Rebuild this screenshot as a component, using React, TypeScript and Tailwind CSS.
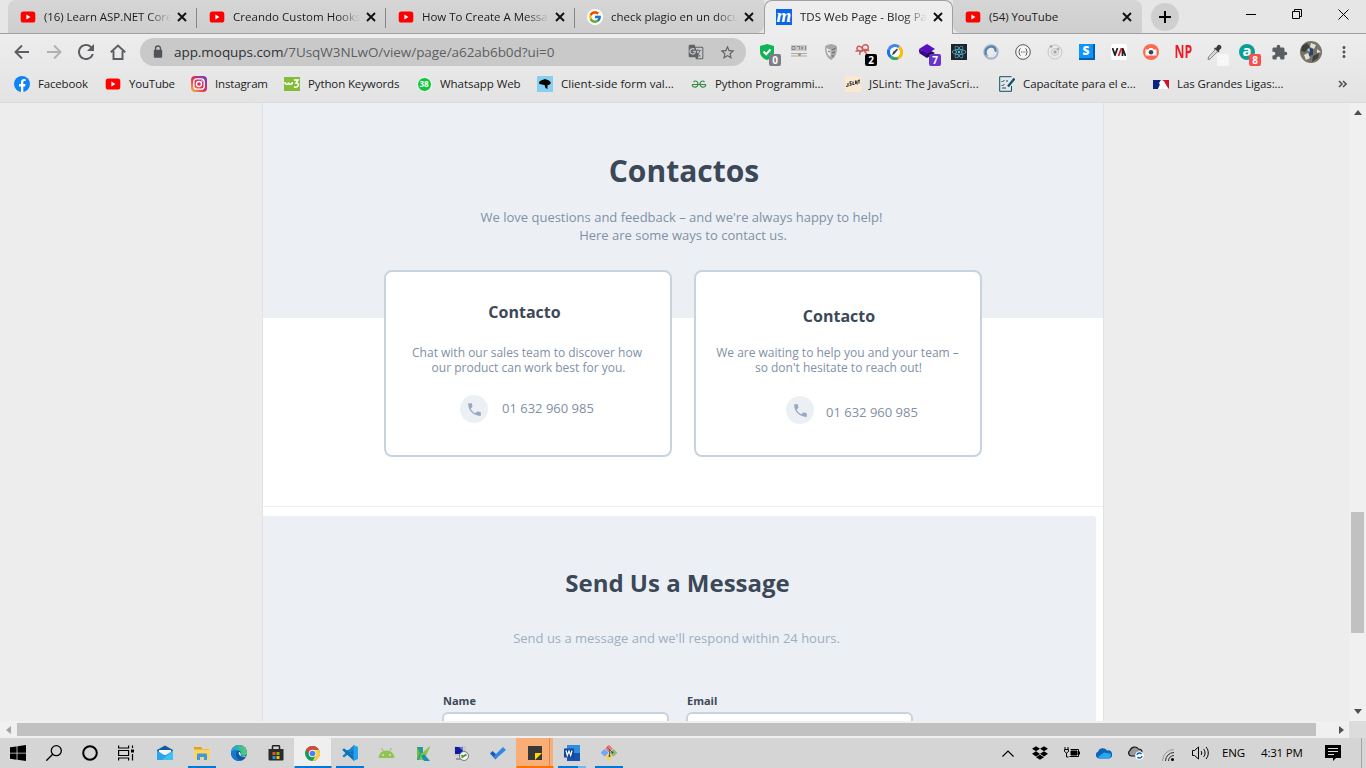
import type { ReactNode } from "react";
import { FcGoogle } from "react-icons/fc";
import { MdPhone, MdGTranslate, MdLock, MdExtension, MdMoreVert, MdStarBorder, MdRefresh } from "react-icons/md";
import { FaDropbox, FaReact } from "react-icons/fa";

const YouTube = () => (
  <svg width="16" height="16" viewBox="0 0 16 16">
    <rect x="0.7" y="2.4" width="14.6" height="11.2" rx="2.6" fill="#f00" />
    <path d="M6.4 5.6v4.8l4-2.4z" fill="#fff" />
  </svg>
);

const Moqups = () => (
  <div className="flex h-4 w-4 items-center justify-center bg-[#0a66f0] pb-1 font-['Liberation_Serif',serif] text-[19px] leading-none font-bold text-white italic">
    m
  </div>
);

const GoogleIcon = () => (
  <div className="flex h-4 w-4 items-center justify-center rounded-full bg-white">
    <FcGoogle size={14} />
  </div>
);

const Close = () => (
  <svg width="10" height="10" viewBox="0 0 10 10" stroke="#111" strokeWidth="1.9">
    <path d="M1 1l8 8M9 1l-8 8" />
  </svg>
);

type TabProps = { icon: ReactNode; title: string; active?: boolean; separator?: boolean; fade?: boolean; shape?: string; tracking: string };

function Tab({ icon, title, active, separator, fade = true, shape = "", tracking }: TabProps) {
  const tone = active ? "bg-[#ededed] border-[#a0a0a0] border-x border-t rounded-t-lg h-[34px] pl-[11px] pb-px" : `bg-linear-to-b from-[#d6d6d6] to-[#cecece] h-[33px] pl-3 ${shape}`;
  return (
    <div className={`relative flex w-[189px] shrink-0 items-center ${tone}`}>
      <div className="flex w-4 shrink-0 justify-center">{icon}</div>
      <div
        className={`ml-2 w-[127px] text-[11.5px] leading-4 whitespace-nowrap ${tracking} ${fade ? "mask-r-from-82% mask-r-to-100%" : ""}`}
      >
        {title}
      </div>
      <div className="ml-[6px]">
        <Close />
      </div>
      {separator && <div className="absolute top-2 right-0 h-5 w-px bg-[#868686]" />}
    </div>
  );
}

function TabStrip() {
  return (
    <div className="flex h-[34px] items-start border-b border-[#a0a0a0] bg-[#e6e6e6] pl-2">
      <Tab icon={<YouTube />} title="(16) Learn ASP.NET Core" separator shape="rounded-tl-lg" tracking="tracking-[-0.06px]" />
      <Tab icon={<YouTube />} title="Creando Custom Hooks" separator tracking="tracking-[0.03px]" />
      <Tab icon={<YouTube />} title="How To Create A Messa" separator tracking="tracking-[-0.03px]" />
      <Tab icon={<GoogleIcon />} title="check plagio en un docu" shape="rounded-br-lg" tracking="tracking-[-0.03px]" />
      <Tab icon={<Moqups />} title="TDS Web Page - Blog Pa" active tracking="tracking-[0.02px]" />
      <Tab icon={<YouTube />} title="(54) YouTube" fade={false} shape="rounded-tr-lg rounded-bl-lg" tracking="tracking-[-0.1px]" />
      <div className="mt-[3px] ml-[9px] flex h-7 w-7 items-center justify-center rounded-full bg-[#cfcfcf]">
        <svg width="12" height="12" viewBox="0 0 12 12" stroke="#000" strokeWidth="2">
          <path d="M6 0v12M0 6h12" />
        </svg>
      </div>
      <div className="ml-auto flex h-7 w-[138px] items-center text-black">
        <div className="flex w-[46px] justify-center">
          <svg width="11" height="11" viewBox="0 0 11 11" stroke="#000" fill="none">
            <path d="M0 5.5h10" />
          </svg>
        </div>
        <div className="flex w-[46px] justify-center">
          <svg width="11" height="11" viewBox="0 0 11 11" stroke="#000" fill="none">
            <path d="M.5 2.5h7v7h-7zM2.5 2.5v-2h7v7h-2" />
          </svg>
        </div>
        <div className="flex w-[46px] justify-center">
          <svg width="11" height="11" viewBox="0 0 11 11" stroke="#000" fill="none">
            <path d="M.5.5l10 10M10.5.5l-10 10" />
          </svg>
        </div>
      </div>
    </div>
  );
}

function Count({ value, tone }: { value: string; tone: string }) {
  return (
    <div className={`absolute top-[10px] left-[10px] flex h-3 w-3 items-center justify-center rounded-xs text-[10px] leading-none font-bold text-white ${tone}`}>
      {value}
    </div>
  );
}

const extensions: ReactNode[] = [
  <>
    <svg width="16" height="16" viewBox="0 0 16 16"><path d="M8 0l7 2v6c0 4-3 6.500-7 8-4-1.500-7-4-7-8V2z" fill="#0fb457" /><path d="M4.500 7.500l2.700 2.700L11.500 5.500" stroke="#fff" strokeWidth="2" fill="none" /></svg>
    <Count value="0" tone="bg-[#7c7c86]" />
  </>,
  <svg width="16" height="16" viewBox="0 0 16 16"><path d="M0 1h16v6H0z" fill="#c9c9c9" /><path d="M1 2.500h3v3H1zM6 2.500h2.500v3M10 2.500l2 3M12 2.500l-2 3M14.500 2v4" stroke="#777" fill="none" strokeWidth=".8" /><path d="M0 9.500h16M0 12h16" stroke="#aaa" /><circle cx="8.500" cy="10.500" r="1.500" fill="#b89454" /></svg>,
  <svg width="16" height="16" viewBox="0 0 16 16"><path d="M8 0c4 1 6 1 6 4 0 5-2 10-6 12C4 14 2 9 2 4c0-3 2-3 6-4z" fill="#a8a8a8" /><path d="M3.500 4l4 2v7c-3-2-4-6-4-9z" fill="#eee" /><path d="M9 6l3.500-2M9 9l3-1M8.500 12h2.500M5 7l2 1" stroke="#666" fill="none" /></svg>,
  <>
    <svg width="16" height="16" viewBox="0 0 16 16" fill="none" stroke="#cd5a5a" strokeWidth="1.400"><ellipse cx="4.800" cy="4.800" rx="3" ry="2.200" transform="rotate(30 4.800 4.800)" /><circle cx="10.300" cy="3.800" r="3" /><path d="M.5 7.500C3 5.500 6 8 8 6.500s4-1.500 6 .5M7.500 7c-2 0-3.500 2-2.500 4M9 7c1 1 3 2 4 5" /></svg>
    <Count value="2" tone="bg-black" />
  </>,
  <svg width="16" height="16" viewBox="0 0 16 16"><circle cx="8" cy="8" r="6" fill="#fff" /><g fill="none" strokeWidth="3"><path d="M2 5.500A6.500 6.500 0 0 1 12 3" stroke="#4285f4" /><path d="M12 3a6.500 6.500 0 0 1-1 11" stroke="#fbbc05" /><path d="M11 14a6.500 6.500 0 0 1-7-1" stroke="#34a853" /><path d="M4 13a6.500 6.500 0 0 1-2-7.500" stroke="#1a73e8" /></g><circle cx="8" cy="8" r="4.500" fill="#fff" /><path d="M5 11l1-3 4-3.500 1 1L7.500 10z" fill="#444" /></svg>,
  <>
    <svg width="16" height="16" viewBox="0 0 16 16"><path d="M8 5l8 4-8 5-8-5z" fill="#1a1147" /><path d="M8 0l8 5-8 5-8-5z" fill="#5b0fc4" /><path d="M0 5l8 5v3L0 8z" fill="#3c0891" /></svg>
    <Count value="7" tone="bg-[#6b35c9]" />
  </>,
  <div className="flex h-4 w-4 items-center justify-center bg-[#20232a] text-[#58c4dc]"><FaReact size={14} /></div>,
  <svg width="16" height="16" viewBox="0 0 16 16" fill="none"><circle cx="8" cy="8" r="6" stroke="#a4b6c9" strokeWidth="3.500" /><path d="M3 11C1 6 5 2 9 2.500c3 .5 4 3 3 5" stroke="#5480ad" strokeWidth="2" /><path d="M5 12c4 2 8 0 8-4" stroke="#e2e9f0" strokeWidth="1.500" /></svg>,
  <svg width="16" height="16" viewBox="0 0 16 16" fill="none" stroke="#555"><circle cx="8" cy="8" r="7.300" fill="#f6f6f6" /><path d="M5.500 4.500C4 4.500 5 7.500 3.500 8 5 8.500 4 11.500 5.500 11.500M10.500 4.500C12 4.500 11 7.500 12.500 8 11 8.500 12 11.500 10.500 11.500" strokeWidth="1" /><path d="M6 8h4.500" strokeWidth="1.200" strokeDasharray="1 .7" /></svg>,
  <svg width="16" height="16" viewBox="0 0 16 16" fill="none" stroke="#c6c6c6"><circle cx="8" cy="8" r="7" /><circle cx="8" cy="8" r="3.500" /><circle cx="8" cy="8" r="1.500" fill="#999" /><circle cx="4" cy="2.500" r="1.200" fill="#888" /><circle cx="11" cy="5" r="1.200" fill="#888" /></svg>,
  <div className="flex h-4 w-4 items-center justify-center border-r-2 border-b-2 border-[#075ea8] bg-[#0f94fb] text-[12px] leading-none font-extrabold text-white">S</div>,
  <div className="flex h-4 w-4 items-center justify-center rounded-xs bg-white"><svg width="14" height="8" viewBox="0 0 14 8" fill="none" strokeWidth="1.800"><path d="M.5 0l2.500 7L5.500 0M10.500 8V0L13.500 8" stroke="#222" /><path d="M9.500 0L6.500 8" stroke="#d7222b" /></svg></div>,
  <svg width="16" height="16" viewBox="0 0 16 16"><circle cx="8" cy="8" r="8" fill="#fa6b50" /><path d="M2.500 5.500h3l1-1.500h3l1 1.500h3v6h-11z" fill="#fff" /><circle cx="8" cy="8.300" r="2.300" fill="#3b4256" /></svg>,
  <div className="scale-x-72 text-[17px] leading-4 font-bold text-[#ed1c24]">NP</div>,
  <>
    <svg width="16" height="16" viewBox="0 0 16 16"><path d="M10.500 1.500c2-2 5 1 3.500 3l-2 2 .5 1-1.500 1L7 5l1-1.500 1 .5z" fill="#3b3b3b" /><path d="M8.500 5.500l2 2L3 15l-2 .5L1.500 13z" fill="#ddd" stroke="#777" strokeWidth=".9" /></svg>
    <Count value="-" tone="bg-[#f7f7f7]" />
  </>,
  <>
    <div className="flex h-4 w-4 items-center justify-center rounded-full bg-[#0c9d94] pb-[3px] text-[15px] leading-none font-bold text-white">a</div>
    <Count value="8" tone="bg-[#f5504e]" />
  </>,
  <MdExtension size={17} className="shrink-0 text-[#5a5d61]" />,
  <svg width="22" height="22" viewBox="0 0 22 22" className="shrink-0"><circle cx="11" cy="11" r="11" fill="#77756a" /><path d="M2 5l5-3 3 4-5 5-4-1zM13 15l6-3-1 5-6 4z" fill="#3d4136" /><path d="M11 2l5 2-2 4-4-2zM4 14l4-2 2 5-4 2zM17 8l4 3-4 1z" fill="#e4e0d8" /><path d="M10 7l3 1v6l-4 1z" fill="#26436f" /><path d="M7 9l2-2 1 4z" fill="#b7c7de" /></svg>,
];

function Toolbar() {
  return (
    <div className="flex h-[36px] items-center pl-[6px]">
      <div className="flex text-[#5a5d61]">
        <div className="flex w-8 justify-center">
          <svg width="16" height="16" viewBox="0 0 16 16" fill="none" stroke="#5a5d61" strokeWidth="1.900"><path d="M15 8H2.500M8 1.500L1.500 8 8 14.500" /></svg>
        </div>
        <div className="flex w-8 justify-center">
          <svg width="16" height="16" viewBox="0 0 16 16" fill="none" stroke="#b0b0b0" strokeWidth="1.900"><path d="M1 8h12.500M8 1.500L14.500 8 8 14.500" /></svg>
        </div>
        <div className="flex w-8 items-center justify-center">
          <svg width="16" height="16" viewBox="4 4 16 16"><MdRefresh size={24} /></svg>
        </div>
        <div className="flex w-8 justify-center">
          <svg width="16" height="16" viewBox="0 0 16 16" fill="none" stroke="#5a5d61" strokeWidth="1.900"><path d="M.8 8.300L8 1.500l7.200 6.800M3.500 7v8h9V7" /></svg>
        </div>
      </div>
      <div className="ml-[6px] flex h-7 w-[606px] items-center rounded-full bg-[#c9c9c9] px-[10px]">
        <svg width="16" height="16" viewBox="0 0 16 16" fill="#505357"><rect x="3.800" y="5.700" width="8.400" height="8" rx="1" /><path d="M5.500 6V4.500a2.500 2.500 0 0 1 5 0V6" fill="none" stroke="#505357" strokeWidth="1.400" /></svg>
        <div className="ml-2 text-[13.5px] leading-5 tracking-[-0.05px] text-[#5d5f62]">
          <span className="text-[#303235]">app.moqups.com</span>/7UsqW3NLwO/view/page/a62ab6b0d?ui=0
        </div>
        <div className="ml-auto flex w-12 items-center justify-between text-[#5f6266]">
          <MdGTranslate size={16} />
          <MdStarBorder size={17} />
        </div>
      </div>
      <div className="ml-[5px] flex">
        {extensions.map((icon, i) => (
          <div key={i} className="flex w-8 justify-center">
            <div className="relative flex h-4 w-4 items-center justify-center">{icon}</div>
          </div>
        ))}
      </div>
      <MdMoreVert size={18} className="ml-2 text-[#505357]" />
    </div>
  );
}

type Bookmark = { icon: ReactNode; label: string; width: string; tracking: string };

const bookmarks: Bookmark[] = [
  { label: "Facebook", width: "w-[91px]", tracking: "tracking-[-0.17px]", icon: <svg width="16" height="16" viewBox="0 0 16 16"><circle cx="8" cy="8" r="8" fill="#1083f5" /><path d="M7 16v-5.500H5V8h2V6.200C7 4 8.200 3 10 3l1.600.1v2h-1c-1 0-1.300.5-1.300 1.200V8h2.200l-.4 2.500H9.300V16z" fill="#fff" /></svg> },
  { label: "YouTube", width: "w-[86px]", tracking: "tracking-[-0.2px]", icon: <YouTube /> },
  { label: "Instagram", width: "w-[93px]", tracking: "tracking-[-0.15px]", icon: <svg width="16" height="16" viewBox="0 0 16 16"><defs><linearGradient id="ig" x1="0" y1="1" x2="1" y2="0"><stop stopColor="#fec053" /><stop offset=".45" stopColor="#e6314f" /><stop offset="1" stopColor="#6240cf" /></linearGradient></defs><rect width="16" height="16" rx="4" fill="url(#ig)" /><g fill="none" stroke="#fff" strokeWidth="1.300"><rect x="2.800" y="2.800" width="10.400" height="10.400" rx="3" /><circle cx="8" cy="8" r="2.500" /></g><circle cx="11" cy="5" r=".8" fill="#fff" /></svg> },
  { label: "Python Keywords", width: "w-[132px]", tracking: "tracking-[-0.12px]", icon: <svg width="16" height="14" viewBox="0 0 16 14"><path d="M0 0h16v14H0z" fill="#83bd3b" /><path d="M1 5c0 3 3.500 3 3.500.5C4.500 8 8.500 8 8.500 5M10 3h4l-2 3c4 0 3 5-2 4" stroke="#fff" strokeWidth="1.500" fill="none" /></svg> },
  { label: "Whatsapp Web", width: "w-[121px]", tracking: "tracking-[-0.05px]", icon: <div className="flex h-[15px] w-[15px] items-center justify-center rounded-full border border-white bg-[#13c43c] text-[8px] leading-none font-bold text-white">38</div> },
  { label: "Client-side form val...", width: "w-[154px]", tracking: "tracking-[0.02px]", icon: <svg width="16" height="16" viewBox="0 0 16 16"><path d="M0 0h16v16H0z" fill="#87cff0" /><path d="M2 6l2-1.500L8 3l4 1.500L14 7l-2 2H10.500v4l-2-1-1-3-5-1z" fill="#000" /></svg> },
  { label: "Python Programmi...", width: "w-[154px]", tracking: "tracking-[-0.08px]", icon: <svg width="16" height="16" viewBox="0 0 16 16" fill="none" stroke="#2f8d46" strokeWidth="1.200"><path d="M2.500 6c1.500-1.800 4.500-1 4.500 2s-3 3.800-5 2.500C1.200 10 1.300 9 1.500 8.500h13c.2.500.3 1.500-.5 2-2 1.300-5 .5-5-2.500s3-3.800 4.500-2" /></svg> },
  { label: "JSLint: The JavaScri...", width: "w-[154px]", tracking: "tracking-[0.06px]", icon: <svg width="16" height="16" viewBox="0 0 16 16"><path d="M0 0h16v16H0z" fill="#fae8d0" /><path d="M1 10.500l2-.5V7M4.500 9.500l1.500-.5V7.500l-1-.3V6L6.500 5.500M8 5.500v3h1.500M10.500 8V5.500l1.500 2V4.500M13 4.500l2-.5M14 4.500V7.500" stroke="#333" strokeWidth="1.100" fill="none" /></svg> },
  { label: "Capacítate para el e...", width: "w-[154px]", tracking: "tracking-[-0.1px]", icon: <svg width="16" height="16" viewBox="0 0 16 16" fill="none" stroke="#0d5268"><path d="M12.500.7H.7v14.600h11.800V10" /><path d="M2.500 5l1 1 2-2M2.500 9l1 1 2-2M7 5h2M7 12H3" /><path d="M15.500 2.500L9 10.500" strokeWidth="2.200" /></svg> },
  { label: "Las Grandes Ligas:...", width: "w-[154px]", tracking: "tracking-[-0.1px]", icon: <svg width="16" height="9" viewBox="0 0 16 9"><path d="M0 0h9L5 9H0z" fill="#0a2483" /><path d="M9 0h7v9z" fill="#d01126" /><path d="M8 0l3 1 4 8h-4.500l-.5-2-1 2H5l2-4-1-2z" fill="#fff" /></svg> },
];

function Bookmarks() {
  return (
    <div className="flex h-7 items-center pl-[14px] text-[11.5px] leading-4 text-[#1c1c1c]">
      {bookmarks.map((b) => (
        <div key={b.label} className={`flex shrink-0 items-center gap-2 whitespace-nowrap ${b.width} ${b.tracking}`}>
          <div className="flex w-4 shrink-0 justify-center">{b.icon}</div>
          {b.label}
        </div>
      ))}
      <svg width="9" height="8" viewBox="0 0 9 8" fill="none" stroke="#505357" strokeWidth="1.600" className="ml-[31px]">
        <path d="M1 1l3 3-3 3M5 1l3 3-3 3" />
      </svg>
    </div>
  );
}

function Phone() {
  return (
    <div className="flex h-7 w-7 items-center justify-center rounded-full bg-[#ecf0f5] pl-px text-[#99a9bf]">
      <MdPhone size={17} />
    </div>
  );
}

function Canvas() {
  return (
    <div className="flex h-full w-[842px] shrink-0 flex-col border-x border-[#dfe2e7] bg-white text-center font-['Open_Sans',sans-serif]">
      <div className="flex h-[215px] shrink-0 flex-col items-center bg-[#ecf0f5] pt-12 text-[#8190a5]">
        <h1 className="pl-[2px] text-[30px] leading-10 font-bold text-[#3c4858]">Contactos</h1>
        <p className="mt-[17px] text-[13px] leading-[18px]">
          <span className="pr-[3px]">We love questions and feedback – and we're always happy to help!</span>
          <br />
          Here are some ways to contact us.
        </p>
      </div>
      <div className="-mt-12 flex shrink-0 justify-center gap-[22px] text-[12px] leading-[15px] text-[#8190a5]">
        <div className="h-[187px] w-[288px] rounded-lg border-2 border-[#c8d3e0] bg-white pt-[30px]">
          <h2 className="pr-[7px] text-[16px] leading-5 font-bold text-[#3c4858]">Contacto</h2>
          <p className="mt-[23px] pr-[2px]">
            Chat with our sales team to discover how
            <br />
            <span className="pl-[3px]">our product can work best for you.</span>
          </p>
          <div className="mt-5 flex pl-[74px]">
            <Phone />
            <span className="ml-[14px] pt-1 text-[13px] leading-[18px]">01 632 960 985</span>
          </div>
        </div>
        <div className="h-[187px] w-[288px] rounded-lg border-2 border-[#c8d3e0] bg-white pt-[34px]">
          <h2 className="pl-[2px] text-[16px] leading-5 font-bold text-[#3c4858]">Contacto</h2>
          <p className="mt-[19px] pr-px">
            We are waiting to help you and your team –
            <br />
            <span className="pl-[2px]">so don't hesitate to reach out!</span>
          </p>
          <div className="mt-[21px] flex pl-[90px]">
            <Phone />
            <span className="ml-3 pt-[7px] text-[13px] leading-[18px]">01 632 960 985</span>
          </div>
        </div>
      </div>
      <div className="mt-[49px] h-px shrink-0 bg-[#ebeef3]" />
      <div className="mt-[9px] mr-[7px] flex grow flex-col items-center overflow-hidden rounded-tr-[3px] bg-[#ecf0f5] pt-[51px]">
        <h2 className="pr-[4px] text-[24px] leading-8 font-bold text-[#3c4858]">Send Us a Message</h2>
        <p className="mt-[30px] pr-[6px] text-[13px] leading-[18px] text-[#a0aec0]">Send us a message and we'll respond within 24 hours.</p>
        <div className="mt-[46px] mr-[4px] flex w-[471px] gap-[17px] text-left text-[11px] leading-4 font-bold text-[#3c4858]">
          <label className="w-[227px]">
            <span className="pl-px">Name</span>
            <div className="mt-[3px] h-9 rounded-md border-2 border-[#c8d3e0] bg-white" />
          </label>
          <label className="w-[227px]">
            <span className="pl-px">Email</span>
            <div className="mt-[3px] h-9 rounded-md border-2 border-[#c8d3e0] bg-white" />
          </label>
        </div>
      </div>
    </div>
  );
}

function Page() {
  return (
    <div className="flex h-[618px] bg-[#ededed]">
      <div className="flex w-[1349px] justify-center overflow-hidden pl-[17px]">
        <Canvas />
      </div>
      <div className="flex w-[17px] flex-col items-center bg-[#f0f0f0] py-[7px]">
        <svg width="8" height="5" viewBox="0 0 8 5"><path d="M0 5l4-5 4 5z" fill="#505050" /></svg>
        <div className="mt-[397px] h-[121px] w-[13px] bg-[#c1c1c1]" />
        <svg width="8" height="5" viewBox="0 0 8 5" className="mt-auto"><path d="M0 0l4 5 4-5z" fill="#505050" /></svg>
      </div>
    </div>
  );
}

function HorizontalScroll() {
  return (
    <div className="flex h-[17px] bg-[#dcdcdc]">
      <div className="flex w-[1349px] items-center bg-[#f0f0f0] pl-[6px]">
        <svg width="5" height="8" viewBox="0 0 5 8"><path d="M5 0L0 4l5 4z" fill="#a3a3a3" /></svg>
        <div className="ml-[6px] h-[13px] w-[1299px] bg-[#c1c1c1]" />
        <svg width="5" height="8" viewBox="0 0 5 8" className="ml-[23px]"><path d="M0 0l5 4-5 4z" fill="#505050" /></svg>
      </div>
    </div>
  );
}

const apps: { icon: ReactNode; bar?: string; cell?: string }[] = [
  { icon: <svg width="16" height="16" viewBox="0 0 16 16"><path d="M0 5l8-4.500L16 5v9.500H0z" fill="#0f5ba5" /><path d="M2 5h12v5H2z" fill="#f6f6f6" /><path d="M0 5.500l8 5 8-5V15H0z" fill="#2aa5ea" /><path d="M16 5.500V15H5z" fill="#3cc1f2" /></svg> },
  { bar: "bg-[#0078d7] w-7", icon: <svg width="16" height="16" viewBox="0 0 16 16"><path d="M0 2h7l1.500 2H15v4H0z" fill="#e3a01d" /><path d="M0 4.500h16V14H0z" fill="#fcd462" /><path d="M3 15V9.500C3 9 3.500 8.500 4 8.500h8c.5 0 1 .5 1 1V15h-3v-3H6v3z" fill="#3f97dc" /></svg> },
  { icon: <svg width="16" height="16" viewBox="0 0 16 16"><defs><linearGradient id="edge" x1="0" x2="1"><stop stopColor="#1b9de2" /><stop offset="1" stopColor="#56d364" /></linearGradient></defs><circle cx="8" cy="8" r="8" fill="#0c59a4" /><path d="M0 8a8 8 0 0 1 16 0c0 3-5 3.500-6.500 2 2-3-1-5-3.500-4.500S1 7 0 8z" fill="url(#edge)" /><path d="M0 8c2-4 6-3 7-2-4 3-2 8 3 9.700A8 8 0 0 1 0 8z" fill="#1479ce" /><path d="M8 7c-1 2 1 5 6 5l1-1c-2 .6-5 .5-5.500-1 1-1.500-.5-3-1.500-3z" fill="#e8eef2" /></svg> },
  { icon: <svg width="16" height="16" viewBox="0 0 16 16"><path d="M.5 4h15v10c0 1-.5 1.500-1.500 1.500H2C1 15.500.5 15 .5 14z" fill="#2b2b2b" /><path d="M4.500 4V1.500C4.500 1 5 .7 5.500.7h5c.5 0 1 .3 1 .8V4" stroke="#222" strokeWidth="1.500" fill="none" /><path d="M4.500 7h3v3h-3z" fill="#f25022" /><path d="M8.500 7h3v3h-3z" fill="#7fba00" /><path d="M4.500 11h3v3h-3z" fill="#00a4ef" /><path d="M8.500 11h3v3h-3z" fill="#ffb900" /></svg> },
  { bar: "bg-[#0078d7] w-full", cell: "bg-[#efefef]", icon: <svg width="15" height="15" viewBox="0 0 16 16"><circle cx="8" cy="8" r="8" fill="#0f9d58" /><path d="M8 4h6.930A8 8 0 0 1 8 16l3.460-6z" fill="#ffcd40" /><path d="M1.070 4A8 8 0 0 1 14.930 4H8L4.540 10z" fill="#db4437" /><circle cx="8" cy="8" r="4" fill="#f1f1f1" /><circle cx="8" cy="8" r="3" fill="#4285f4" /></svg> },
  { bar: "bg-[#0078d7] w-7", icon: <svg width="16" height="16" viewBox="0 0 16 16"><path d="M12 5v6L2 3.500.3 5z" fill="#0a70b8" /><path d="M12 0v5L2 12.500.3 11z" fill="#1583d0" /><path d="M12 16v-5L2 3.500.3 5z" fill="#0a70b8" /><path d="M11.500 0L16 2v12l-4.500 2z" fill="#24a2ee" /></svg> },
  { icon: <svg width="17" height="16" viewBox="0 0 17 16"><path d="M.5 13C.8 8.500 4 5.500 8.500 5.500S16.200 8.500 16.500 13z" fill="#94c355" /><path d="M3.500 3l2 3.500M13.500 3l-2 3.500" stroke="#94c355" /><circle cx="5" cy="10" r=".8" fill="#fff" /><circle cx="12" cy="10" r=".8" fill="#fff" /></svg> },
  { icon: <svg width="15" height="15" viewBox="0 0 15 15"><path d="M1 1h6v13H1z" fill="#249c98" /><path d="M14 0L5 8l-2 6h5l6-13z" fill="#8bc53f" /><path d="M8 8l6 7H8L5 10z" fill="#1792b8" /><path d="M1 1l3 6-3 7z" fill="#76ba33" /></svg> },
  { icon: <svg width="16" height="16" viewBox="0 0 16 16"><path d="M1 1h12v10H1z" fill="#c9c9c9" /><path d="M2 2h8v7H2z" fill="#101ca0" /><path d="M6 2h4v4z" fill="#6b78e0" /><path d="M3 13h5v2H3z" fill="#999" /><circle cx="11" cy="11" r="4.500" fill="#f5f5f5" stroke="#777" /><path d="M8.500 10l2 2M13.500 10l-2 0M8.500 12.500l5-3" stroke="#2da12f" strokeWidth="1.500" /></svg> },
  { icon: <svg width="16" height="16" viewBox="0 0 16 16"><path d="M0 8.500L2.500 6 8 11l-2.500 3.500z" fill="#195bb8" /><path d="M5.500 14L3.500 11.500 13 2l3 3z" fill="#3187e8" /></svg> },
  { bar: "bg-[#ff7400] w-full", cell: "bg-[#f9ae78]", icon: <><svg width="14" height="14" viewBox="0 0 14 14"><path d="M0 0h14v14H0z" fill="#383838" /><path d="M7 7h7l-7 7z" fill="#ffd800" /></svg><div className="absolute right-[3px] h-full w-px bg-[#d98a55]" /></> },
  { bar: "bg-[#0078d7] w-7 border-r-8 border-[#76b5ea]", icon: <svg width="16" height="16" viewBox="0 0 16 16"><path d="M3 0h13v8H3z" fill="#2f8ee0" /><path d="M3 8h13v8H3z" fill="#1752ad" /><path d="M0 3.500h10v9H0z" fill="#124497" /><path d="M2 5.500l1.300 5L5 6l1.700 4.500L8 5.500" stroke="#fff" fill="none" strokeWidth="1.200" /></svg> },
  { bar: "bg-[#0078d7] w-7", icon: <svg width="16" height="16" viewBox="0 0 16 16"><rect x="5.200" y=".8" width="5.600" height="5.600" rx="1" transform="rotate(45 8 3.600)" fill="#f07878" /><rect x=".8" y="5" width="5.600" height="5.600" rx="1" transform="rotate(45 3.600 7.800)" fill="#75a6f2" /><rect x="9.600" y="5" width="5.600" height="5.600" rx="1" transform="rotate(45 12.400 7.800)" fill="#90ba72" /><rect x="5.200" y="9.400" width="5.600" height="5.600" rx="1" transform="rotate(45 8 12.200)" fill="#efd36b" /><path d="M6 2l5.500 5.500M8.500 5v6" stroke="#6d5a55" fill="none" /><circle cx="8.500" cy="11" r="1" fill="#444" /><circle cx="11.500" cy="7.500" r="1" fill="#444" /></svg> },
];

const system: ReactNode[] = [
  <svg width="16" height="16" viewBox="0 0 16 16"><path d="M0 2.300L6.600 1.400v6.300H0zM7.400 1.300L16 0v7.700H7.400zM0 8.400h6.600v6.300L0 13.700zM7.400 8.400H16V16l-8.600-1.300z" /></svg>,
  <svg width="16" height="16" viewBox="0 0 16 16" fill="none" stroke="#000" strokeWidth="1.300"><circle cx="10.300" cy="5.700" r="5" /><path d="M6.700 9.300L.3 15.700" /></svg>,
  <svg width="16" height="16" viewBox="0 0 16 16" fill="none" stroke="#000" strokeWidth="2"><circle cx="8" cy="8" r="6.800" /></svg>,
  <svg width="16" height="16" viewBox="0 0 16 16" fill="none" stroke="#000" strokeWidth="1.200"><path d="M.6.500v2.500h10V.5M.6 5.500h10v5H.6zM.6 15.500V13h10v2.500M14.500.5V3M14.500 9v6.500" /><path d="M13 4.500h3v3h-3z" fill="#000" stroke="none" /></svg>,
];

const tray: ReactNode[] = [
  <svg width="12" height="7" viewBox="0 0 12 7" fill="none" stroke="#000" strokeWidth="1.200"><path d="M.5 6.500L6 1l5.500 5.500" /></svg>,
  <FaDropbox size={16} />,
  <svg width="16" height="12" viewBox="0 0 16 12" fill="none" stroke="#000"><path d="M6.500 2.500h8v7h-9M15.500 4.500v3" /><path d="M7 4h6v4H7z" fill="#000" /><path d="M1 0v2M4 0v2M.5 2.500h4v2l-2 1.500-2-1.500zM2.500 6v4h2" /></svg>,
  <svg width="16" height="12" viewBox="0 0 16 12"><path d="M3.500 11.500A3.500 3.500 0 0 1 2 4.800 5 5 0 0 1 11 3.500 4 4 0 0 1 13 11.500z" fill="#0a66b8" /><path d="M2 10l6-4.500 6 1a3 3 0 0 1-1 5H3.500z" fill="#28a8ea" /></svg>,
  <svg width="16" height="14" viewBox="0 0 16 14"><path d="M3.500 10A3 3 0 0 1 2 4.500 4.800 4.800 0 0 1 10.500 3 3.500 3.500 0 0 1 14 6.500V10z" fill="#999" stroke="#111" strokeWidth="1.200" /><circle cx="11.500" cy="9.500" r="4.300" fill="#fff" /><path d="M9 9a2.500 2.500 0 0 1 4.500-1M14 10a2.500 2.500 0 0 1-4.500 1" fill="none" stroke="#0a63b8" strokeWidth="1.400" /></svg>,
  <svg width="12" height="12" viewBox="0 0 12 12" fill="none" stroke="#333" className="mt-[3px]"><path d="M.5 12A11.500 11.500 0 0 1 12 .5" stroke="#999" /><path d="M3.500 12A8.500 8.500 0 0 1 12 3.500M6.500 12A5.500 5.500 0 0 1 12 6.500" /><circle cx="10.500" cy="10.500" r="1.500" fill="#000" stroke="none" /></svg>,
  <svg width="17" height="14" viewBox="0 0 17 14" fill="none" stroke="#000"><path d="M.5 4.500h2l4-3.500v12l-4-3.500h-2zM9 5c1 1 1 3 0 4M11.500 3c2 2 2 6 0 8M14 1c3 3 3 9 0 12" /></svg>,
];

function Taskbar() {
  return (
    <div className="flex h-[30px] bg-[#d5d5d5]">
      {system.map((icon, i) => (
        <div key={i} className="flex w-9 items-center justify-center">{icon}</div>
      ))}
      <div className="ml-[2px] flex">
        {apps.map((app, i) => (
          <div key={i} className={`relative flex w-[37px] items-center justify-center ${app.cell ?? ""}`}>
            {app.icon}
            {app.bar && <div className={`absolute bottom-0 left-1/2 h-[2px] -translate-x-1/2 ${app.bar}`} />}
          </div>
        ))}
      </div>
      <div className="ml-auto flex items-center text-[11.5px] leading-4 text-black">
        {tray.map((icon, i) => (
          <div key={i} className="flex w-8 justify-center">{icon}</div>
        ))}
        <div className="ml-[6px] w-[39px] tracking-[-0.15px]">ENG</div>
        <div className="w-[64px] tracking-[-0.2px] whitespace-nowrap">4:31 PM</div>
        <svg width="16" height="16" viewBox="0 0 16 16"><path d="M0 0h16v13h-5l-3 3v-3H0z" /><path d="M3 3.500h10M3 6.500h10M3 9.500h6" stroke="#ddd" /></svg>
        <div className="mr-1 ml-5 h-[30px] w-px bg-[#a5a5a5]" />
      </div>
    </div>
  );
}

export default function App() {
  return (
    <div className="h-[768px] w-[1366px] overflow-hidden font-['Open_Sans',sans-serif] text-[#1c1c1c]">
      <TabStrip />
      <div className="h-[69px] border-b border-[#d9dbe2] bg-linear-to-b from-[#ededed] to-[#e3e3e3]">
        <Toolbar />
        <Bookmarks />
      </div>
      <Page />
      <HorizontalScroll />
      <Taskbar />
    </div>
  );
}
